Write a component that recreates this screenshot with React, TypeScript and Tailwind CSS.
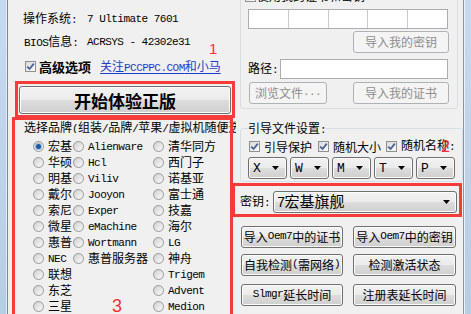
import React from 'react';

const ASCII = /^[\x00-\x7f]+$/;

// Latin runs get a narrow mono face, CJK runs keep the parent font
const Tx: React.FC<{ s: string }> = ({ s }) => (
  <>
    {s.split(/([\x00-\x7f]+)/).filter(Boolean).map((p, i) =>
      ASCII.test(p) ? (
        <span key={i} className="font-['Liberation_Mono',monospace] text-[0.92em] tracking-[-0.05em] whitespace-pre">{p}</span>
      ) : (
        <span key={i}>{p}</span>
      )
    )}
  </>
);

const Check: React.FC<{ on?: boolean }> = ({ on }) => (
  <span className="w-[11px] h-[11px] shrink-0 border border-[#8e8f8f] bg-[linear-gradient(135deg,#d9d9d9,#fbfbfb)] flex items-center justify-center">
    {on && (
      <svg width="9" height="9" viewBox="0 0 9 9">
        <path d="M1.2 4.6 L3.6 7 L7.8 1.6" fill="none" stroke="#4a6394" strokeWidth="1.8" />
      </svg>
    )}
  </span>
);

const Radio: React.FC<{ on?: boolean }> = ({ on }) => (
  <span className="w-[11px] h-[11px] shrink-0 rounded-full border border-[#979797] bg-[linear-gradient(135deg,#cfcfcf,#fbfbfb)] flex items-center justify-center">
    {on && <span className="w-[5px] h-[5px] rounded-full bg-[#1d5aa6] shadow-[0_0_0_1px_#9cbde3]" />}
  </span>
);

const Btn: React.FC<{ label: string; className?: string; disabled?: boolean }> = ({ label, className = '', disabled }) => (
  <div
    className={
      disabled
        ? `h-[22px] shrink-0 flex items-center justify-center rounded-[3px] border border-[#adb2b5] bg-[#f4f4f4] text-[#8d8d8d] ${className}`
        : `h-[22px] shrink-0 flex items-center justify-center rounded-[3px] border border-[#707070] bg-[linear-gradient(#f2f2f2,#ebebeb_50%,#dddddd_50%,#cfcfcf)] shadow-[inset_0_0_0_1px_#fbfbfb] ${className}`
    }
  >
    <Tx s={label} />
  </div>
);

const Arrow = () => (
  <svg width="7" height="4" viewBox="0 0 7 4" className="shrink-0">
    <polygon points="0,0 7,0 3.5,4" fill="#000" />
  </svg>
);

const Drop: React.FC<{ label: string }> = ({ label }) => (
  <div className="w-[39px] h-[22px] flex items-center pl-[4px] pr-[7px] rounded-[3px] border border-[#707070] bg-[linear-gradient(#f2f2f2,#ebebeb_50%,#dddddd_50%,#cfcfcf)] shadow-[inset_0_0_0_1px_#fbfbfb]">
    <span className="flex-1 font-['Liberation_Mono',monospace] text-[13px]">{label}</span>
    <Arrow />
  </div>
);

const col1 = ['宏基', '华硕', '明基', '戴尔', '索尼', '微星', '惠普', 'NEC', '联想', '东芝', '三星'];
const col2 = ['Alienware', 'Hcl', 'Viliv', 'Jooyon', 'Exper', 'eMachine', 'Wortmann', '惠普服务器'];
const col3 = ['清华同方', '西门子', '诺基亚', '富士通', '技嘉', '海尔', 'LG', '神舟', 'Trigem', 'Advent', 'Medion'];

const RadioCol: React.FC<{ items: string[]; className: string }> = ({ items, className }) => (
  <div className={`flex flex-col ${className}`}>
    {items.map(t => (
      <div key={t} className="h-4 flex items-center whitespace-nowrap">
        <Radio on={t === '宏基'} />
        <span className="ml-[4px]"><Tx s={t} /></span>
      </div>
    ))}
  </div>
);

const LeftPane = () => (
  <div className="w-[228px] shrink-0 flex flex-col">
    <div className="-mt-[18px] h-[23px] flex items-center pl-[15px] whitespace-nowrap">
      <span className="w-[64px]">品牌信息:</span>
      <span>宏碁电脑股份有限公司</span>
    </div>
    <div className="mt-[3px] h-[23px] flex items-center pl-[15px] whitespace-nowrap">
      <span className="w-[64px]">操作系统<Tx s=":" /></span>
      <Tx s="7 Ultimate 7601" />
    </div>
    <div className="h-[23px] flex items-center pl-[16px] whitespace-nowrap">
      <span className="w-[63px]"><Tx s="BIOS信息:" /></span>
      <Tx s="ACRSYS - 42302e31" />
    </div>
    <div className="mt-[2px] h-[23px] flex items-center pl-[17px] whitespace-nowrap">
      <Check on />
      <span className="ml-[3px] font-bold text-[13px]">高级选项</span>
      <span className="ml-[9px] text-[#1b3fc8] underline underline-offset-2"><Tx s="关注PCCPPC.COM和小马" /></span>
    </div>
    <div className="mt-[8px] ml-[11px] w-[212px] h-[28px] flex items-center justify-center rounded-[3px] border border-[#707070] bg-[linear-gradient(#f2f2f2,#ebebeb_50%,#dddddd_50%,#cfcfcf)] shadow-[inset_0_0_0_1px_#fbfbfb] font-bold text-[17px]">
      开始体验正版
    </div>
    <div className="mt-[7px] h-[12px] pl-[16px] overflow-hidden whitespace-nowrap">
      <Tx s="选择品牌(组装/品牌/苹果/虚拟机随便选" />
    </div>
    <div className="mt-[5px] pl-[25px] flex">
      <RadioCol items={col1} className="w-[40px]" />
      <RadioCol items={col2} className="w-[80px]" />
      <RadioCol items={col3} className="flex-1" />
    </div>
  </div>
);

const RightPane = () => (
  <div className="flex-1 flex flex-col">
    <div className="-mt-[14px] ml-[4px] w-[218px] border border-[#d5dfe5] rounded-[3px] flex flex-col pb-[4px]">
      <div className="h-[18px] flex items-center pl-[4px] whitespace-nowrap">
        <Check />
        <span className="ml-[1px]">使用我的证书和密钥</span>
      </div>
      <div className="mt-[4px] ml-[7px] w-[200px] h-[20px] flex border border-[#abadb3] bg-white divide-x divide-[#c9cbd0]">
        <div className="flex-1" />
        <div className="flex-1" />
        <div className="flex-1" />
        <div className="flex-1" />
        <div className="flex-1" />
      </div>
      <Btn disabled label="导入我的密钥" className="mt-[2px] ml-[112px] w-[96px]" />
      <div className="mt-[6px] h-[20px] flex items-center pl-[7px]">
        <span className="w-[32px]">路径<Tx s=":" /></span>
        <div className="w-[168px] h-[20px] border border-[#abadb3] bg-white" />
      </div>
      <div className="mt-[3px] flex">
        <Btn disabled label="浏览文件..." className="ml-[8px] w-[78px]" />
        <Btn disabled label="导入我的证书" className="ml-[26px] w-[96px]" />
      </div>
    </div>

    <fieldset className="mt-[13px] ml-[4px] w-[218px] border border-[#d5dfe5] rounded-[3px] px-[7px] pb-[2px]">
      <legend className="h-[12px] leading-[12px]">引导文件设置<Tx s=":" /></legend>
      <div className="mt-[6px] h-[13px] flex items-center whitespace-nowrap">
        <span className="ml-[1px]"><Check on /></span>
        <span className="ml-[4px]">引导保护</span>
        <span className="ml-[6px]"><Check on /></span>
        <span className="ml-[4px]">随机大小</span>
        <span className="ml-[5px]"><Check on /></span>
        <span className="ml-[4px]">随机名称<Tx s=":" /></span>
      </div>
      <div className="mt-[4px] flex gap-[3px]">
        <Drop label="X" />
        <Drop label="W" />
        <Drop label="M" />
        <Drop label="T" />
        <Drop label="P" />
      </div>
    </fieldset>

    <div className="mt-[9px] h-[22px] flex items-center pl-[4px]">
      <span className="w-[33px]">密钥<Tx s=":" /></span>
      <div className="w-[184px] h-[22px] flex items-center pl-[3px] pr-[6px] rounded-[3px] border border-[#707070] bg-[linear-gradient(#f2f2f2,#ebebeb_50%,#dddddd_50%,#cfcfcf)] shadow-[inset_0_0_0_1px_#fbfbfb]">
        <span className="flex-1 text-[15px]"><Tx s="7宏基旗舰" /></span>
        <Arrow />
      </div>
    </div>

    <div className="mt-[13px] pl-[5px] flex gap-[10px]">
      <Btn label="导入Oem7中的证书" className="w-[102px]" />
      <Btn label="导入Oem7中的密钥" className="w-[103px]" />
    </div>
    <div className="mt-[6px] pl-[5px] flex gap-[10px]">
      <Btn label="自我检测(需网络)" className="w-[102px]" />
      <Btn label="检测激活状态" className="w-[103px]" />
    </div>
    <div className="mt-[8px] pl-[5px] flex gap-[10px]">
      <Btn label="Slmgr延长时间" className="w-[102px]" />
      <Btn label="注册表延长时间" className="w-[103px]" />
    </div>
  </div>
);

export default function App() {
  return (
    <div className="w-[471px] h-[314px] overflow-hidden relative flex bg-[#f0f0f0] font-['Noto_Sans_CJK_SC','Noto_Sans',sans-serif] text-[12px] leading-none text-black">
      {/* window frame, left */}
      <div className="w-[6px] shrink-0 bg-[linear-gradient(#c6daef,#b6cde6)]" />
      <div className="w-[1px] shrink-0 bg-[#e2ebf5]" />
      <div className="w-[1px] shrink-0 bg-[#7b8894]" />

      <div className="flex-1 flex">
        <LeftPane />
        <RightPane />
      </div>

      {/* window frame, right */}
      <div className="w-[1px] shrink-0 bg-[#8a96a2]" />
      <div className="w-[1px] shrink-0 bg-[#eaf2fa]" />
      <div className="w-[6px] shrink-0 bg-[linear-gradient(#c6daef,#b6cde6)]" />

      {/* red annotations */}
      <div className="absolute left-[15px] top-[81px] w-[220px] h-[37px] border-[3px] border-[#f63b3b]" />
      <div className="absolute left-[12px] top-[117px] w-[221px] h-[210px] border-[3px] border-[#f63b3b]" />
      <div className="absolute left-[232px] top-[183px] w-[230px] h-[34px] border-[3px] border-[#f63b3b]" />
      <span className="absolute left-[209px] top-[41px] font-['Liberation_Sans',sans-serif] text-[15px] text-[#ff2f2f]">1</span>
      <span className="absolute left-[441px] top-[139px] font-['Liberation_Sans',sans-serif] text-[16px] text-[#ff2f2f]">2</span>
      <span className="absolute left-[112px] top-[297px] font-['Liberation_Sans',sans-serif] text-[18px] text-[#ff2f2f]">3</span>
    </div>
  );
}
